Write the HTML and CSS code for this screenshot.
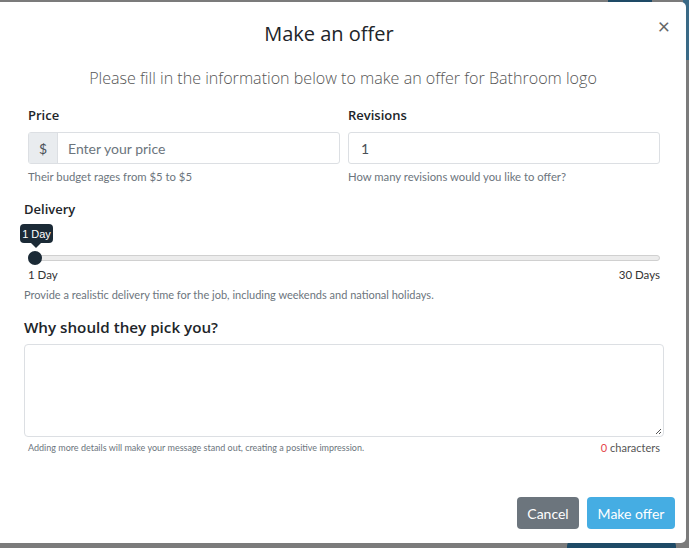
FILE: index.html
```html
<!DOCTYPE html>
<html>
<head>
<meta charset="utf-8">
<link rel="stylesheet" href="styles.css">
</head>
<body>
<div class="under under-top"></div>
<div class="under under-top2"></div>
<div class="under under-bottom"></div>
<div class="modal">
  <div class="modal-header">
    <h2 class="title">Make an offer</h2>
    <span class="close">×</span>
  </div>
  <p class="subtitle">Please fill in the information below to make an offer for Bathroom logo</p>
  <div class="body">
    <div class="row">
      <div class="col">
        <label class="label">Price</label>
        <div class="input-group">
          <span class="prepend">$</span>
          <span class="input placeholder">Enter your price</span>
        </div>
        <div class="help">Their budget rages from $5 to $5</div>
      </div>
      <div class="col">
        <label class="label">Revisions</label>
        <div class="input single">1</div>
        <div class="help">How many revisions would you like to offer?</div>
      </div>
    </div>

    <div class="section">
      <label class="label">Delivery</label>
      <div class="slider">
        <div class="track"></div>
        <div class="thumb"></div>
        <div class="tip">1 Day</div>
      </div>
      <div class="ends"><span>1 Day</span><span>30 Days</span></div>
      <div class="help">Provide a realistic delivery time for the job, including weekends and national holidays.</div>
    </div>

    <div class="section why">
      <label class="label big">Why should they pick you?</label>
      <div class="textarea">
        <svg class="grip" width="8" height="8" viewBox="0 0 8 8"><path d="M7 2 L2 7 M7 5 L5 7" stroke="#555" stroke-width="1" fill="none"/></svg>
      </div>
      <div class="below">
        <span class="tiny">Adding more details will make your message stand out, creating a positive impression.</span>
        <span class="count"><span class="zero">0</span> characters</span>
      </div>
    </div>
  </div>
  <div class="footer">
    <button class="btn cancel">Cancel</button>
    <button class="btn primary">Make offer</button>
  </div>
</div>
</body>
</html>
```
FILE: styles.css
```css
html, body {
  margin: 0;
  padding: 0;
}
body {
  background: #7b7b7b;
  width: 689px;
  height: 548px;
  overflow: hidden;
  position: relative;
  font-family: "Lato", "Open Sans", sans-serif;
  color: #212529;
}
.under {
  position: absolute;
  background: #1e4a66;
}
.under-top { left: 608px; top: 0; width: 44px; height: 4px; }
.under-top2 { left: 683px; top: 0; width: 6px; height: 60px; background: #3a6a86; }
.under-bottom { left: 567px; top: 540px; width: 109px; height: 10px; border-radius: 6px 6px 0 0; }
.modal {
  position: relative;
  margin-top: 2px;
  width: 686px;
  height: 541px;
  background: #fff;
  border-radius: 0 5px 5px 0;
  box-sizing: border-box;
  display: flex;
  flex-direction: column;
}
.modal-header {
  height: 50px;
  display: flex;
  align-items: center;
  padding: 0 16px 0 0;
}
.title {
  flex: 1;
  text-align: center;
  margin: 0;
  padding-top: 12px;
  font-family: "Open Sans", sans-serif;
  font-size: 20px;
  font-weight: 400;
  color: #212529;
}
.close {
  align-self: flex-start;
  margin-top: 13px;
  font-size: 21px;
  color: #666;
  line-height: 1;
}
.subtitle {
  margin: 15px 0 0;
  text-align: center;
  font-family: "Open Sans", sans-serif;
  font-size: 16.1px;
  font-weight: 300;
  color: #555;
}
.body {
  padding: 0 22px 0 24px;
}
.row {
  display: flex;
  margin-top: 16px;
}
.col {
  flex: 1;
  padding: 0 4px;
  display: flex;
  flex-direction: column;
}
.label {
  font-family: "Open Sans", sans-serif;
  font-size: 13px;
  font-weight: 600;
  color: #212529;
  line-height: 20px;
  display: block;
}
.input-group {
  display: flex;
  margin-top: 7px;
  height: 32px;
  border: 1px solid #dcdfe3;
  border-radius: 3px;
  box-sizing: border-box;
}
.prepend {
  width: 28px;
  background: #e9ecef;
  border-right: 1px solid #dcdfe3;
  display: flex;
  align-items: center;
  justify-content: center;
  font-size: 14px;
  color: #495057;
}
.input {
  display: flex;
  align-items: center;
  font-size: 14px;
  color: #495057;
}
.input-group .input {
  padding-left: 10px;
}
.placeholder { color: #6c757d; }
.single {
  margin-top: 7px;
  height: 32px;
  border: 1px solid #dcdfe3;
  border-radius: 3px;
  box-sizing: border-box;
  padding-left: 12px;
}
.help {
  margin-top: 5px;
  font-size: 11.3px;
  color: #6c757d;
  line-height: 16px;
}
.section {
  margin-top: 14px;
}
.slider {
  position: relative;
  height: 47px;
  margin: 0 4px;
}
.track {
  position: absolute;
  left: 0;
  right: 0;
  top: 36px;
  height: 6px;
  background: #ececec;
  border: 1px solid #d0d0d0;
  border-radius: 4px;
  box-sizing: border-box;
}
.thumb {
  position: absolute;
  left: 0;
  top: 32px;
  width: 14px;
  height: 14px;
  border-radius: 50%;
  background: #1b2a36;
}
.tip {
  position: absolute;
  left: -8px;
  top: 5px;
  width: 33px;
  height: 19px;
  background: #1b2a36;
  color: #fff;
  font-size: 11px;
  border-radius: 4px;
  display: flex;
  align-items: center;
  justify-content: center;
  font-family: "Liberation Sans", Arial, sans-serif;
}
.tip::after {
  content: "";
  position: absolute;
  left: 11px;
  bottom: -5px;
  border-left: 5px solid transparent;
  border-right: 5px solid transparent;
  border-top: 5px solid #1b2a36;
}
.ends {
  display: flex;
  justify-content: space-between;
  margin: 1px 4px 0;
  font-size: 11.5px;
  color: #333;
  line-height: 16px;
}
.section .help {
  margin-top: 4px;
  font-size: 11px;
}
.why {
  margin-top: 14px;
}
.big {
  font-size: 15.2px;
}
.textarea {
  position: relative;
  margin-top: 7px;
  height: 93px;
  border: 1px solid #dcdfe3;
  border-radius: 4px;
  box-sizing: border-box;
}
.grip {
  position: absolute;
  right: 1px;
  bottom: 1px;
}
.below {
  display: flex;
  justify-content: space-between;
  align-items: center;
  margin: 4px 4px 0;
}
.tiny {
  font-size: 9px;
  color: #6c757d;
}
.count {
  font-size: 11px;
  color: #555;
}
.zero { color: #e4454a; }
.footer {
  margin-top: auto;
  display: flex;
  justify-content: flex-end;
  gap: 8px;
  padding: 0 11px 14px 0;
}
.btn {
  height: 32px;
  border: none;
  border-radius: 4px;
  color: #fff;
  font-family: "Lato", sans-serif;
  font-size: 14px;
  padding: 0;
}
.cancel { background: #6c757d; width: 62px; }
.primary { background: #45ade3; width: 88px; }
```
